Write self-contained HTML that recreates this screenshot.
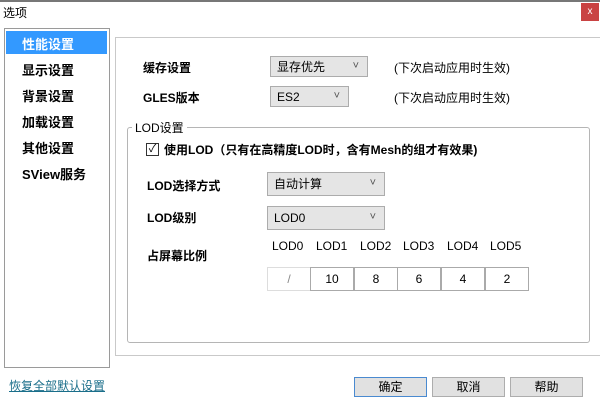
<!DOCTYPE html>
<html><head><meta charset="utf-8"><style>
*{margin:0;padding:0;box-sizing:border-box}
body{width:600px;height:409px;background:#fff;position:relative;overflow:hidden;font-family:"Liberation Sans","Noto Sans CJK SC",sans-serif;font-size:12px;color:#000}
.a{position:absolute;white-space:nowrap}
.b{font-weight:bold}
.combo{position:absolute;background:#e5e5e5;border:1px solid #acacac;padding-left:6px;line-height:20px;font-size:12px}
.combo::after{content:"˅";position:absolute;right:8px;top:-1px;font-size:11px;color:#555}
.btn{position:absolute;top:377px;width:73px;height:20px;border:1px solid #adadad;background:#e1e1e1;text-align:center;line-height:18px;font-size:12px}
.cell{position:absolute;top:267px;height:24px;width:44px;border:1px solid #c9c9c9;text-align:center;line-height:22px;background:#fff}
</style></head><body>
<div class="a" style="left:0;top:0;width:600px;height:2px;background:#777"></div>
<div class="a" style="left:3px;top:4px;font-size:12px">选项</div>
<div class="a" style="left:581px;top:3px;width:18px;height:18px;background:#c94343;color:#fff;font-size:10px;text-align:center;line-height:17px">x</div>

<div class="a" style="left:4px;top:28px;width:106px;height:340px;border:1px solid #9a9a9a"></div>
<div class="a" style="left:6px;top:31px;width:101px;height:23px;background:#3399ff"></div>
<div class="a b" style="left:22px;top:34px;color:#fff;font-size:13px">性能设置</div>
<div class="a b" style="left:22px;top:60px;font-size:13px">显示设置</div>
<div class="a b" style="left:22px;top:86px;font-size:13px">背景设置</div>
<div class="a b" style="left:22px;top:112px;font-size:13px">加载设置</div>
<div class="a b" style="left:22px;top:138px;font-size:13px">其他设置</div>
<div class="a b" style="left:22px;top:164px;font-size:13px">SView服务</div>

<div class="a" style="left:115px;top:37px;width:490px;height:319px;border:1px solid #c9c9c9"></div>

<div class="a b" style="left:143px;top:59px">缓存设置</div>
<div class="combo" style="left:270px;top:56px;width:98px;height:21px">显存优先</div>
<div class="a" style="left:394px;top:59px">(下次启动应用时生效)</div>
<div class="a b" style="left:143px;top:89px">GLES版本</div>
<div class="combo" style="left:270px;top:86px;width:79px;height:21px">ES2</div>
<div class="a" style="left:394px;top:89px">(下次启动应用时生效)</div>

<div class="a" style="left:127px;top:127px;width:463px;height:216px;border:1px solid #b5b5b5;border-radius:3px"></div>
<div class="a" style="left:132px;top:119px;background:#fff;padding:0 3px">LOD设置</div>
<div class="a" style="left:146px;top:143px;width:13px;height:13px;border:1px solid #333;background:#fff;font-size:11px;line-height:11px;text-align:center">✓</div>
<div class="a b" style="left:164px;top:141px">使用LOD（只有在高精度LOD时，含有Mesh的组才有效果)</div>

<div class="a b" style="left:147px;top:177px">LOD选择方式</div>
<div class="combo" style="left:267px;top:172px;width:118px;height:24px;line-height:22px">自动计算</div>
<div class="a b" style="left:147px;top:209px">LOD级别</div>
<div class="combo" style="left:267px;top:206px;width:118px;height:24px;line-height:22px">LOD0</div>
<div class="a b" style="left:147px;top:247px">占屏幕比例</div>
<div class="a" style="left:272px;top:239px">LOD0</div>
<div class="a" style="left:316px;top:239px">LOD1</div>
<div class="a" style="left:360px;top:239px">LOD2</div>
<div class="a" style="left:403px;top:239px">LOD3</div>
<div class="a" style="left:447px;top:239px">LOD4</div>
<div class="a" style="left:490px;top:239px">LOD5</div>
<div class="cell" style="left:267px;border-color:#ddd;color:#888">/</div>
<div class="cell" style="left:310px;border-color:#aaa">10</div>
<div class="cell" style="left:354px;border-color:#aaa">8</div>
<div class="cell" style="left:397px;border-color:#aaa">6</div>
<div class="cell" style="left:441px;border-color:#aaa">4</div>
<div class="cell" style="left:485px;border-color:#aaa">2</div>

<div class="a" style="left:9px;top:377px;color:#1a6e8a;text-decoration:underline">恢复全部默认设置</div>
<div class="btn" style="left:354px;border-color:#4a8ad0">确定</div>
<div class="btn" style="left:432px">取消</div>
<div class="btn" style="left:510px">帮助</div>
</body></html>
